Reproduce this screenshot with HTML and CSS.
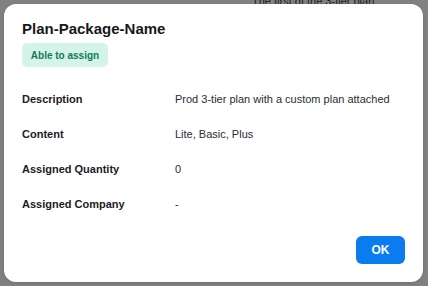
FILE: index.html
```html
<!DOCTYPE html>
<html lang="en">
<head>
<meta charset="utf-8">
<title>Plan-Package-Name</title>
<link rel="stylesheet" href="styles.css">
</head>
<body>
<div class="backdrop">
  <p class="behind-text">The first of the 3-tier plan</p>
</div>
<div class="modal" role="dialog" aria-labelledby="modal-title">
  <h1 class="modal-title" id="modal-title">Plan-Package-Name</h1>
  <div class="badge-row"><span class="badge">Able to assign</span></div>
  <dl class="details">
    <div class="detail-row"><dt>Description</dt><dd>Prod 3-tier plan with a custom plan attached</dd></div>
    <div class="detail-row"><dt>Content</dt><dd>Lite, Basic, Plus</dd></div>
    <div class="detail-row"><dt>Assigned Quantity</dt><dd>0</dd></div>
    <div class="detail-row"><dt>Assigned Company</dt><dd>-</dd></div>
  </dl>
  <div class="actions"><button class="btn-ok" type="button">OK</button></div>
</div>
</body>
</html>
```
FILE: styles.css
```css
* { box-sizing: border-box; }
html, body {
  margin: 0;
  padding: 0;
  width: 428px;
  height: 286px;
  overflow: hidden;
  background: #808080;
  font-family: "Liberation Sans", Arial, sans-serif;
}
.backdrop {
  height: 286px;
}
.behind-text {
  margin: 0;
  padding-left: 252px;
  margin-top: -6px;
  font-size: 11px;
  line-height: 14px;
  color: #1c1c1c;
}
.modal {
  position: absolute;
  left: 4px;
  top: 4px;
  width: 419px;
  height: 278px;
  background: #ffffff;
  border-radius: 12px;
  box-shadow: 0 1px 3px rgba(0, 0, 0, 0.15);
  padding: 15px 18px 18px 18px;
  display: flex;
  flex-direction: column;
  color: #1d2026;
}
.modal-title {
  margin: 0;
  font-size: 15px;
  line-height: 20px;
  font-weight: 700;
  color: #16181c;
}
.badge-row {
  display: flex;
  margin-top: 4px;
}
.badge {
  display: inline-flex;
  align-items: center;
  justify-content: center;
  height: 24px;
  width: 86px;
  border-radius: 5px;
  background: #d4f3e9;
  color: #137a58;
  font-size: 10px;
  font-weight: 700;
}
.details {
  margin: 25px 0 0 0;
  display: flex;
  flex-direction: column;
  gap: 20px;
}
.detail-row {
  display: grid;
  grid-template-columns: 153px 1fr;
  font-size: 11px;
  line-height: 15px;
}
.detail-row dt {
  font-weight: 700;
  color: #1d2026;
}
.detail-row dd {
  margin: 0;
  color: #2a2d33;
}
.actions {
  margin-top: 24px;
  display: flex;
  justify-content: flex-end;
}
.btn-ok {
  width: 49px;
  height: 28px;
  border: none;
  border-radius: 6px;
  background: #0a7cf0;
  color: #ffffff;
  font-family: "Liberation Sans", Arial, sans-serif;
  font-size: 12px;
  font-weight: 700;
  padding: 0;
}
```
